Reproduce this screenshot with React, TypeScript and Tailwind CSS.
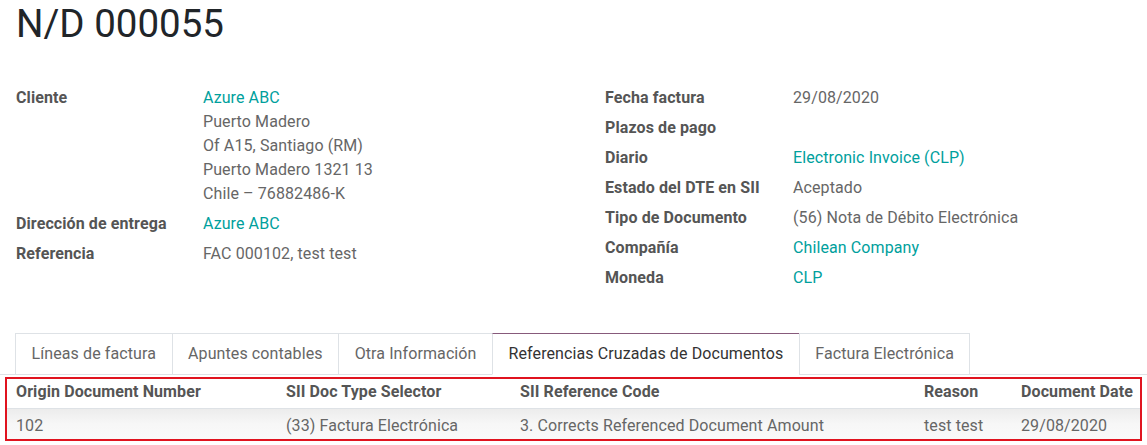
const leftFields: { label: string; lines: { text: string; link?: boolean }[] }[] = [
  {
    label: "Cliente",
    lines: [
      { text: "Azure ABC", link: true },
      { text: "Puerto Madero" },
      { text: "Of A15, Santiago (RM)" },
      { text: "Puerto Madero 1321 13" },
      { text: "Chile – 76882486-K" },
    ],
  },
  { label: "Dirección de entrega", lines: [{ text: "Azure ABC", link: true }] },
  { label: "Referencia", lines: [{ text: "FAC 000102, test test" }] },
];

const rightFields: { label: string; value: string; link?: boolean }[] = [
  { label: "Fecha factura", value: "29/08/2020" },
  { label: "Plazos de pago", value: "" },
  { label: "Diario", value: "Electronic Invoice (CLP)", link: true },
  { label: "Estado del DTE en SII", value: "Aceptado" },
  { label: "Tipo de Documento", value: "(56) Nota de Débito Electrónica" },
  { label: "Compañía", value: "Chilean Company", link: true },
  { label: "Moneda", value: "CLP", link: true },
];

const tabs = [
  "Líneas de factura",
  "Apuntes contables",
  "Otra Información",
  "Referencias Cruzadas de Documentos",
  "Factura Electrónica",
];

const cols = "grid grid-cols-[270px_234px_404px_97px_1fr]";

export default function App() {
  return (
    <div className="h-[445px] w-[1147px] overflow-hidden bg-white font-['Roboto',sans-serif] text-[16px] tracking-[0.1px] text-[#666]">
      <h1 className="pl-4 text-[38.5px] leading-[48px] font-normal tracking-normal text-[#212529]">N/D 000055</h1>

      <div className="mt-[35px] grid grid-cols-[605px_1fr]">
        <div className="pl-4">
          {leftFields.map((f) => (
            <div key={f.label} className="flex py-[3px] leading-6">
              <div className="w-[187px] shrink-0 font-bold text-[#555]">{f.label}</div>
              <div>
                {f.lines.map((l) => (
                  <div key={l.text} className={l.link ? "text-[#00a09d]" : ""}>
                    {l.text}
                  </div>
                ))}
              </div>
            </div>
          ))}
        </div>
        <div>
          {rightFields.map((f) => (
            <div key={f.label} className="flex py-[3px] leading-6">
              <div className="w-[188px] shrink-0 font-bold text-[#555]">{f.label}</div>
              <div className={f.link ? "text-[#00a09d]" : ""}>{f.value}</div>
            </div>
          ))}
        </div>
      </div>

      <div className="mt-[40px] flex border-b border-[#dee2e6] pl-[15px]">
        {tabs.map((t, i) =>
          i === 3 ? (
            <div
              key={t}
              className="-mb-px -ml-px border border-[#dee2e6] border-t-[#875a7b] border-b-white bg-white px-[15.5px] py-2 leading-6 text-[#333]"
            >
              {t}
            </div>
          ) : (
            <div
              key={t}
              className={`-mb-px border border-[#dee2e6] px-[15.5px] py-2 leading-6 text-[#666] ${i > 0 ? "-ml-px" : ""}`}
            >
              {t}
            </div>
          )
        )}
      </div>

      <div className="mx-[5px] mt-[2px] border-2 border-[#e0131f]">
        <div className={`${cols} border-b border-[#dee2e6] pt-px pb-[4px] pl-[9px] leading-6 font-bold text-[#555]`}>
          <div>Origin Document Number</div>
          <div>SII Doc Type Selector</div>
          <div>SII Reference Code</div>
          <div>Reason</div>
          <div>Document Date</div>
        </div>
        <div className={`${cols} bg-gradient-to-b from-[#ececec] via-[#f7f7f7] to-[#f9f9f9] pt-[5px] pb-px pl-[9px] leading-6`}>
          <div>102</div>
          <div>(33) Factura Electrónica</div>
          <div>3. Corrects Referenced Document Amount</div>
          <div>test test</div>
          <div>29/08/2020</div>
        </div>
      </div>
    </div>
  );
}
